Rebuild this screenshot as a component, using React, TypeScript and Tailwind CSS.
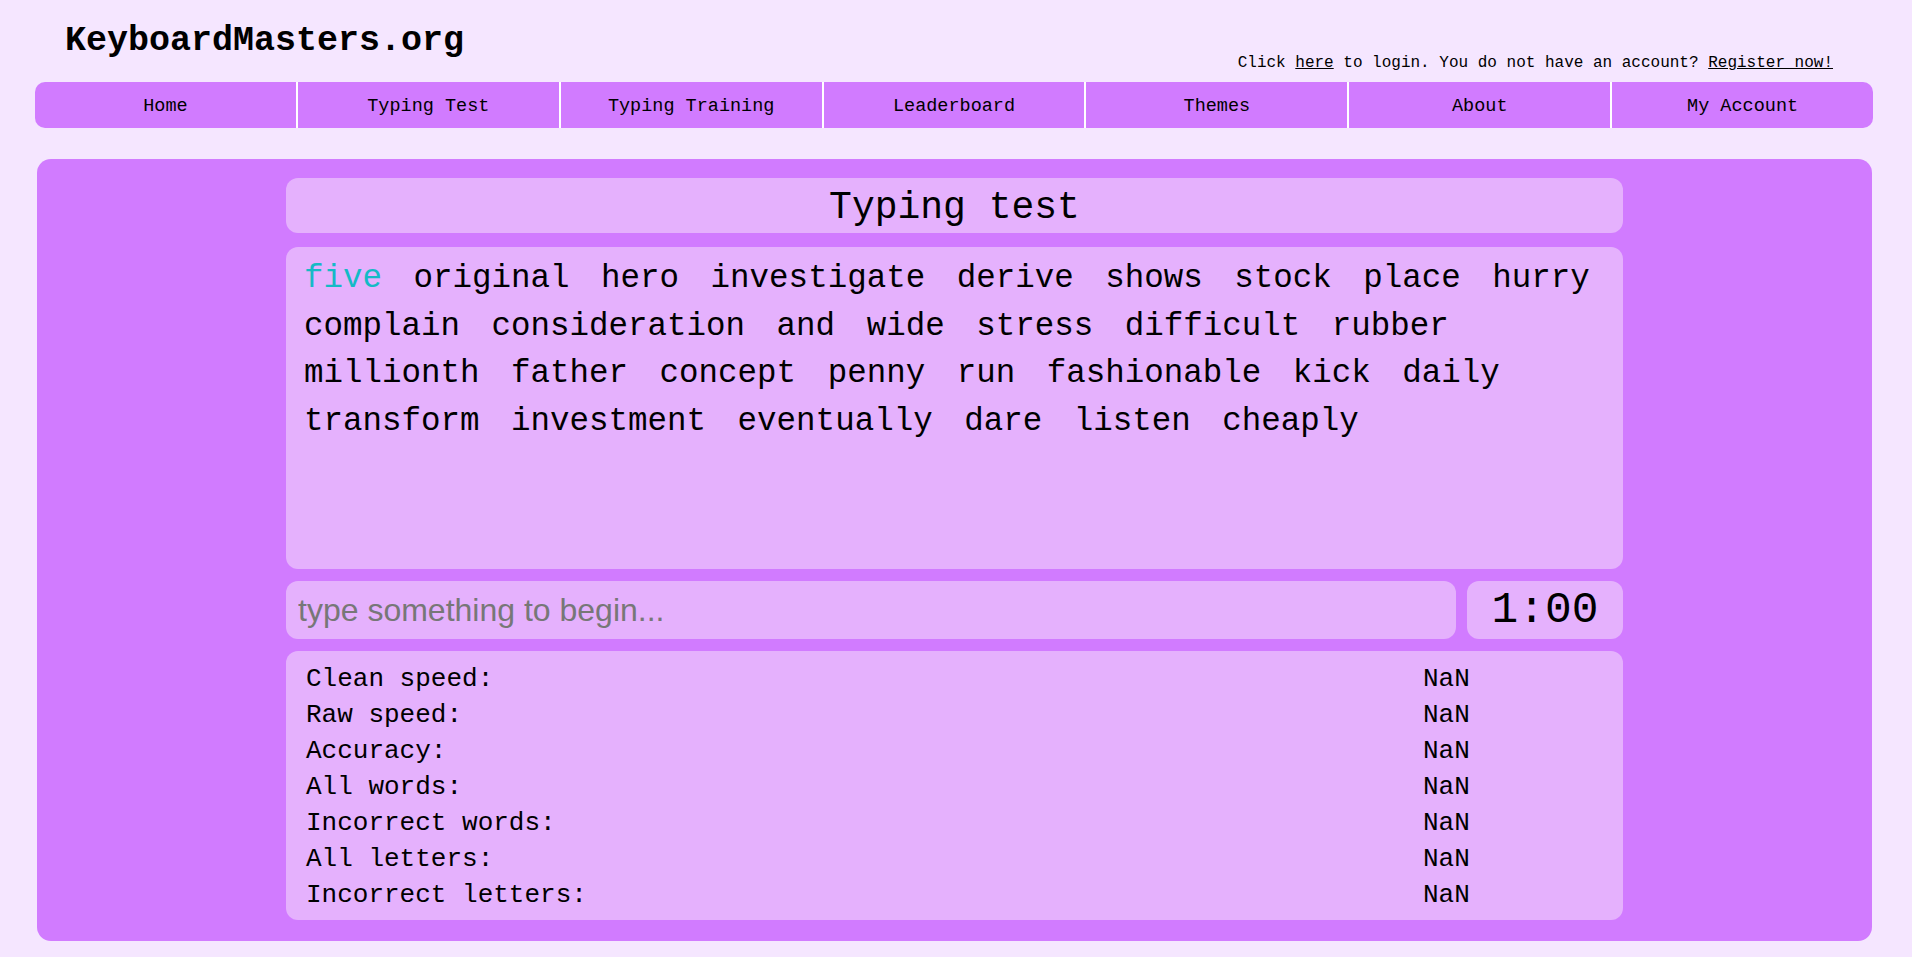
const navItems = ['Home', 'Typing Test', 'Typing Training', 'Leaderboard', 'Themes', 'About', 'My Account']

const words = [
  'original', 'hero', 'investigate', 'derive', 'shows', 'stock', 'place', 'hurry',
  'complain', 'consideration', 'and', 'wide', 'stress', 'difficult', 'rubber',
  'millionth', 'father', 'concept', 'penny', 'run', 'fashionable', 'kick', 'daily',
  'transform', 'investment', 'eventually', 'dare', 'listen', 'cheaply',
]

const stats = [
  'Clean speed:',
  'Raw speed:',
  'Accuracy:',
  'All words:',
  'Incorrect words:',
  'All letters:',
  'Incorrect letters:',
]

const mono = "font-['Liberation_Mono','DejaVu_Sans_Mono',monospace]"

export default function App() {
  return (
    <div className={`min-h-screen bg-[#f5e6ff] text-black ${mono} pb-[16px]`}>
      {/* header */}
      <header className="flex h-[82px] items-start justify-between pl-[65px] pr-[79px] pt-[21px]">
        <h1 className="text-[35px] font-bold leading-[40px]">KeyboardMasters.org</h1>
        <p className="mt-[32px] text-[16px] leading-[20px]">
          Click <a href="#" className="underline">here</a> to login. You do not have an account?{' '}
          <a href="#" className="underline">Register now!</a>
        </p>
      </header>

      <nav className="ml-[35px] mr-[39px] flex h-[46px] overflow-hidden rounded-[10px] bg-[#d17bff]">
        {navItems.map((item, i) => (
          <a
            key={item}
            href="#"
            className={`flex flex-1 items-center justify-center pt-[3px] text-[18.5px] ${i > 0 ? 'border-l-2 border-white' : ''}`}
          >
            {item}
          </a>
        ))}
      </nav>

      {/* main panel */}
      <main className="ml-[37px] mr-[40px] mt-[31px] rounded-[14px] bg-[#d17bff] pt-[19px] pb-[21px]">
        <div className="mx-auto flex w-[1337px] flex-col gap-[14px]">
          <div className="flex h-[55px] items-center justify-center rounded-[12px] bg-[#e5b1fd] pt-[3px] text-[38px]">
            Typing test
          </div>

          <div className="h-[322px] rounded-[12px] bg-[#e5b1fd] pl-[18px] pr-[16px] pt-[8px] text-[32.5px] leading-[47.6px]">
            <span className="mr-[12px] text-[#14bac6]">five</span>{' '}
            {words.map((w) => (
              <span key={w}>
                <span className="mr-[12px]">{w}</span>{' '}
              </span>
            ))}
          </div>

          <div className="-mt-[2px] flex h-[58px] gap-[11px]">
            <input
              type="text"
              placeholder="type something to begin..."
              className="h-full min-w-0 flex-1 rounded-[12px] bg-[#e5b1fd] px-[12px] font-['Liberation_Sans',Arial,sans-serif] text-[32px] outline-none placeholder:text-[#777]"
            />
            <div className="flex w-[156px] items-center justify-center rounded-[12px] bg-[#e5b1fd] text-[44.5px]">
              1:00
            </div>
          </div>

          <div className="-mt-[2px] rounded-[12px] bg-[#e5b1fd] pl-[20px] pt-[10px] pb-[7px] text-[26px] leading-[36px]">
            {stats.map((label) => (
              <div key={label} className="grid grid-cols-[1117px_1fr]">
                <span>{label}</span>
                <span>NaN</span>
              </div>
            ))}
          </div>
        </div>
      </main>
    </div>
  )
}
